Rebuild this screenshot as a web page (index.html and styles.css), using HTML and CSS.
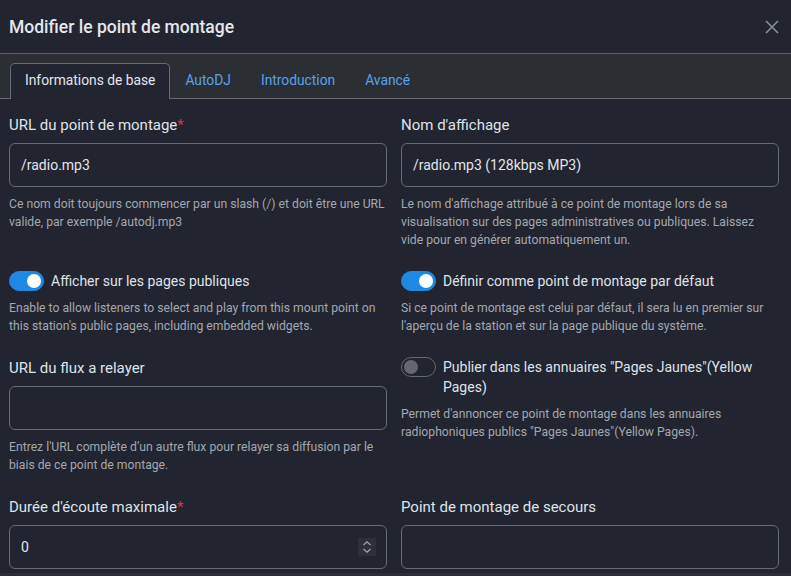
FILE: index.html
```html
<!DOCTYPE html>
<html lang="fr">
<head>
<meta charset="utf-8">
<title>Modifier le point de montage</title>
<link rel="stylesheet" href="styles.css">
</head>
<body>
<div class="modal">
  <header class="modal-header">
    <h5 class="modal-title">Modifier le point de montage</h5>
    <button class="close" aria-label="Fermer">
      <svg width="14" height="14" viewBox="0 0 14 14"><path d="M1 1L13 13M13 1L1 13" stroke="currentColor" stroke-width="1.6" fill="none"/></svg>
    </button>
  </header>
  <nav class="tabs">
    <a class="tab active">Informations de base</a>
    <a class="tab">AutoDJ</a>
    <a class="tab">Introduction</a>
    <a class="tab">Avancé</a>
  </nav>
  <div class="modal-body">
    <div class="form-grid">
      <div class="field">
        <label class="label">URL du point de montage<span class="req">*</span></label>
        <div class="input">/radio.mp3</div>
        <p class="help">Ce nom doit toujours commencer par un slash (/) et doit être une URL valide, par exemple /autodj.mp3</p>
      </div>
      <div class="field">
        <label class="label">Nom d'affichage</label>
        <div class="input">/radio.mp3 (128kbps MP3)</div>
        <p class="help">Le nom d'affichage attribué à ce point de montage lors de sa visualisation sur des pages administratives ou publiques. Laissez vide pour en générer automatiquement un.</p>
      </div>
      <div class="field">
        <div class="switch-row">
          <span class="switch on"><span class="knob"></span></span>
          <span class="switch-label">Afficher sur les pages publiques</span>
        </div>
        <p class="help">Enable to allow listeners to select and play from this mount point on this station's public pages, including embedded widgets.</p>
      </div>
      <div class="field">
        <div class="switch-row">
          <span class="switch on"><span class="knob"></span></span>
          <span class="switch-label">Définir comme point de montage par défaut</span>
        </div>
        <p class="help">Si ce point de montage est celui par défaut, il sera lu en premier sur l'aperçu de la station et sur la page publique du système.</p>
      </div>
      <div class="field">
        <label class="label">URL du flux a relayer</label>
        <div class="input"></div>
        <p class="help">Entrez l'URL complète d’un autre flux pour relayer sa diffusion par le biais de ce point de montage.</p>
      </div>
      <div class="field">
        <div class="switch-row">
          <span class="switch"><span class="knob"></span></span>
          <span class="switch-label">Publier dans les annuaires "Pages Jaunes"(Yellow Pages)</span>
        </div>
        <p class="help">Permet d'annoncer ce point de montage dans les annuaires radiophoniques publics "Pages Jaunes"(Yellow Pages).</p>
      </div>
      <div class="field">
        <label class="label">Durée d'écoute maximale<span class="req">*</span></label>
        <div class="input number">
          <span class="value">0</span>
          <span class="spin">
            <svg width="10" height="14" viewBox="0 0 10 14"><path d="M1.5 5L5 1.8L8.5 5M1.5 9L5 12.2L8.5 9" stroke="currentColor" stroke-width="1.3" fill="none"/></svg>
          </span>
        </div>
      </div>
      <div class="field">
        <label class="label">Point de montage de secours</label>
        <div class="input"></div>
      </div>
    </div>
  </div>
  <div class="modal-footer"></div>
</div>
</body>
</html>
```

FILE: styles.css
```css
* { box-sizing: border-box; }
html, body {
  margin: 0;
  padding: 0;
  background: #222430;
}
body {
  width: 791px;
  height: 576px;
  overflow: hidden;
  font-family: Roboto, "Liberation Sans", sans-serif;
  color: #dee2e6;
}
.modal {
  display: flex;
  flex-direction: column;
  height: 576px;
}
.modal-header {
  height: 54px;
  flex: none;
  display: flex;
  align-items: center;
  justify-content: space-between;
  padding: 0 12px 0 9px;
  border-bottom: 1px solid #5d6168;
}
.modal-title {
  margin: 0;
  font-size: 17.5px;
  font-weight: 500;
  color: #e4e7eb;
  line-height: 24px;
}
.close {
  border: 0;
  background: none;
  padding: 0;
  color: #8c9096;
  display: flex;
  cursor: pointer;
}
.tabs {
  flex: none;
  display: flex;
  padding: 9px 0 0 10px;
  background: #2b2f34;
  border-bottom: 1px solid #666a70;
  height: 45px;
}
.tab {
  display: block;
  height: 36px;
  padding: 0 14px 2px;
  border: 1px solid transparent;
  border-bottom: 0;
  border-radius: 5px 5px 0 0;
  font-size: 13.8px;
  line-height: 33px;
  color: #58a2ea;
  white-space: nowrap;
}
.tab.active {
  background: #222430;
  border-color: #676b72;
  color: #e4e7eb;
}
.modal-body {
  flex: none;
  padding: 15px 12px 4px 9px;
}
.form-grid {
  display: grid;
  grid-template-columns: 378px 378px;
  column-gap: 14px;
  row-gap: 22px;
}
.field {
  display: flex;
  flex-direction: column;
}
.label {
  font-size: 15px;
  line-height: 22px;
  color: #dfe3e8;
  margin-bottom: 7px;
}
.req { color: #d23a4c; }
.input {
  height: 44px;
  border: 1px solid #676b72;
  border-radius: 6px;
  padding: 0 10px 0 11px;
  display: flex;
  align-items: center;
  font-size: 14px;
  color: #e2e5e9;
}
.input.number { justify-content: space-between; }
.spin {
  width: 18px;
  height: 18px;
  background: #2e3039;
  color: #9fa3aa;
  display: flex;
  align-items: center;
  justify-content: center;
}
.help {
  margin: 8px 0 0;
  font-size: 12.2px;
  line-height: 18px;
  color: #a3a8ae;
}
.switch-row {
  display: flex;
  align-items: flex-start;
  gap: 7px;
}
.switch {
  flex: none;
  width: 35px;
  height: 20px;
  border-radius: 10px;
  border: 1px solid #646870;
  display: flex;
  align-items: center;
  padding: 0 2px;
}
.switch .knob {
  width: 14px;
  height: 14px;
  border-radius: 50%;
  background: #64676f;
}
.switch.on {
  background: #1e88e5;
  border-color: #1e88e5;
  justify-content: flex-end;
}
.switch.on .knob { background: #ffffff; }
.switch-label {
  font-size: 14px;
  line-height: 20px;
  color: #dfe3e8;
}
.modal-footer {
  flex: 1;
  background: #2c2e33;
}
```
